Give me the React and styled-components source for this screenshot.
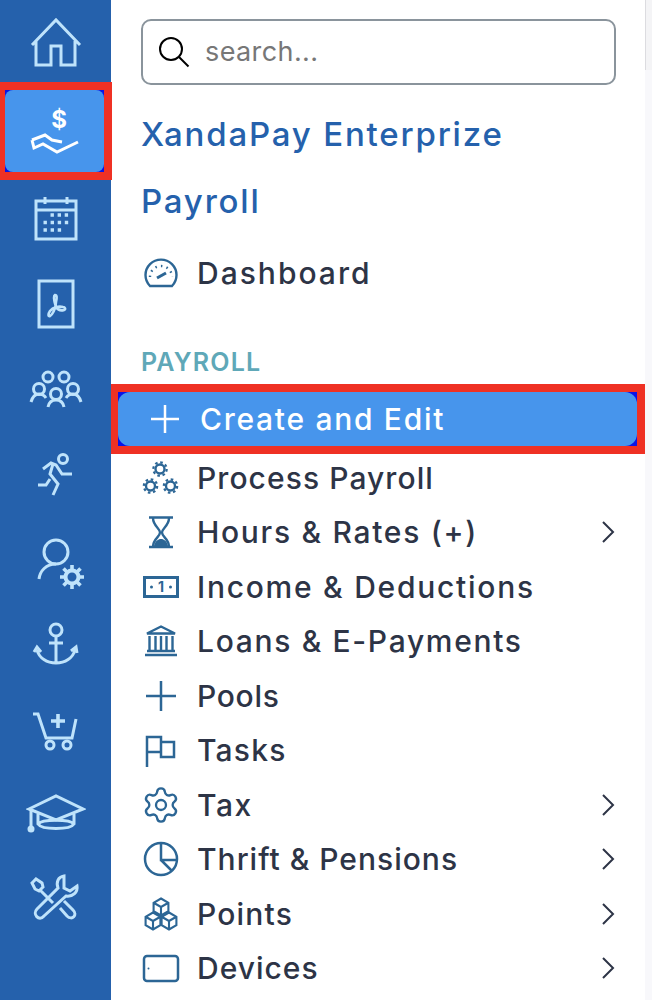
import React from 'react';
import styled, { createGlobalStyle } from 'styled-components';
import { Settings } from 'lucide-react';

const GlobalStyle = createGlobalStyle`
  html, body {
    margin: 0;
    padding: 0;
    background: #fff;
  }
  * {
    box-sizing: border-box;
  }
`;

const Page = styled.div`
  display: grid;
  grid-template-columns: 111px 534px 7px;
  width: 652px;
  height: 1000px;
  overflow: hidden;
  font-family: Inter, 'Open Sans', sans-serif;
`;

const Rail = styled.nav`
  background: #2561ac;
  display: flex;
  flex-direction: column;
  position: relative;
  z-index: 1;
`;

const RailItem = styled.div`
  height: ${({ $h }) => $h || 86}px;
  flex: none;
  display: flex;
  align-items: center;
  justify-content: center;
`;

const RailActive = styled.div`
  height: 98px;
  width: 112px;
  margin: -4px 0;
  flex: none;
  border: 8px solid #ef3124;
  border-left-width: 5px;
  background: #0a14e6;
`;

const RailActiveFill = styled.div`
  height: 100%;
  background: #4795ec;
  border-radius: 8px;
  display: flex;
  align-items: center;
  justify-content: center;
`;

const RailSvg = styled.svg`
  fill: none;
  stroke: ${({ $white }) => ($white ? '#fff' : '#bfe3fb')};
  stroke-width: 3;
`;

const DollarSign = styled.text`
  font-family: Inter, sans-serif;
  font-size: 24px;
  font-weight: 700;
  fill: #fff;
  stroke: none;
`;

const DotFill = styled.circle`
  fill: ${({ $light }) => ($light ? '#bfe3fb' : '#2c6695')};
  stroke: none;
`;

const Panel = styled.main`
  background: #fff;
  padding: 19px 29px 0 30px;
  display: flex;
  flex-direction: column;
`;

const SearchBox = styled.div`
  height: 66px;
  flex: none;
  border: 2px solid #8a949c;
  border-radius: 10px;
  display: flex;
  align-items: center;
  gap: 14px;
  padding: 0 0 2px 12px;
`;

const SearchSvg = styled.svg`
  fill: none;
  stroke: #000;
  stroke-width: 2;
  flex: none;
`;

const SearchInput = styled.input`
  border: 0;
  outline: 0;
  flex: 1;
  min-width: 0;
  padding: 0;
  background: none;
  font: 400 27px Inter, 'Open Sans', sans-serif;
  letter-spacing: 0.4px;
  &::placeholder {
    color: #777;
    opacity: 1;
  }
`;

const Heading = styled.h2`
  margin: ${({ $top }) => $top || 0}px 0 0;
  height: 67px;
  flex: none;
  display: flex;
  align-items: center;
  font-size: 33px;
  font-weight: 500;
  color: #2561ac;
  letter-spacing: 1.8px;
`;

const NavRow = styled.div`
  height: 54.5px;
  margin-top: ${({ $top }) => $top || 0}px;
  flex: none;
  display: flex;
  align-items: center;
  gap: 16px;
`;

const NavIcon = styled.span`
  width: 40px;
  height: 40px;
  flex: none;
  display: flex;
  align-items: center;
  justify-content: center;
`;

const NavSvgBase = styled.svg`
  fill: none;
  stroke: #2c6695;
  stroke-width: 2.5;
`;

const MoneyDigit = styled.text`
  font: 700 14px Inter, sans-serif;
  fill: #2c6695;
  stroke: none;
`;

const NavLabel = styled.span`
  flex: 1;
  font-size: 30px;
  font-weight: 500;
  color: #2d3446;
  white-space: nowrap;
  letter-spacing: ${({ $track }) => $track}px;
`;

const ChevronSvg = styled.svg`
  fill: none;
  stroke: #2d3446;
  stroke-width: 2;
  margin-right: 1px;
`;

const SectionLabel = styled.div`
  margin-top: 46px;
  font-size: 25px;
  line-height: 30px;
  font-weight: 600;
  letter-spacing: 1.2px;
  color: #5fa8b8;
`;

const ActiveWrap = styled.div`
  height: 70px;
  margin: 7px -29px -3px -30px;
  flex: none;
  padding: 8px;
  padding-left: 7px;
  background: #ef3124;
  position: relative;
  z-index: 1;
`;

const ActiveCorner = styled.div`
  height: 100%;
  background: #0a14e6;
`;

const ActiveRow = styled.div`
  height: 100%;
  padding-left: 27px;
  background: #4795ec;
  border-radius: 12px;
  display: flex;
  align-items: center;
  gap: 15px;
`;

const PlusSvg = styled.svg`
  fill: none;
  stroke: #fff;
  stroke-width: 2.5;
`;

const ActiveLabel = styled.span`
  font-size: 30px;
  font-weight: 500;
  letter-spacing: 1.7px;
  color: #fff;
`;

const Gutter = styled.aside`
  background: #f8f8fb;
`;

const GutterTop = styled.div`
  height: 70px;
  border-left: 1px solid #dcdce0;
  background: #f4f4f6;
`;

function NavSvg({ children }) {
  return (
    <NavSvgBase viewBox="0 0 40 40" width="40" height="40">
      {children}
    </NavSvgBase>
  );
}

function GearDot({ cx, cy }) {
  return (
    <>
      <circle cx={cx} cy={cy} r="4.5" strokeWidth="2.4" />
      <circle cx={cx} cy={cy} r="6.7" strokeWidth="2.2" strokeDasharray="2.6 2.66" />
    </>
  );
}

function Cube({ x, y }) {
  return (
    <path
      strokeWidth="2.1"
      transform={`translate(${x} ${y})`}
      d="M0-8.5 7.4-4.25V4.25L0 8.5-7.4 4.25V-4.25zM-7.4-4.25 0 0 7.4-4.25M0 0V8.5"
    />
  );
}

function Chevron() {
  return (
    <ChevronSvg viewBox="0 0 14 24" width="14" height="24">
      <path d="M2 2l10 10L2 22" />
    </ChevronSvg>
  );
}

const RAIL_ITEMS = [
  { key: 'home', draw: <path d="M6 32 30 7l24 25M10 28v24h15V33h10v19h14V28" /> },
  {
    key: 'pay',
    active: true,
    draw: (
      <>
        <path d="M7 39l2 8 9-4 14 8 21-10M7 39l13-5 7 5 10 2" />
        <DollarSign x="34" y="27" textAnchor="middle">$</DollarSign>
      </>
    ),
  },
  {
    key: 'calendar',
    draw: (
      <>
        <path d="M10 12h40v38H10zM10 21h40M19 8v7M41 8v7" />
        <path
          strokeDasharray="3.4 3.7"
          d="M24.5 26h18M17.5 33.5h25M17.5 41h18"
          strokeWidth="3.4"
        />
      </>
    ),
  },
  {
    key: 'pdf',
    draw: (
      <>
        <path d="M13 6h34v46H13z" />
        <path d="M29 20c-2 1-1 6 1 12 2 3 5 4 8 3 2-1 1-3-1-3-4-1-10 0-13 4-2 3-2 6 0 5 2-1 6-7 6-14 1-4 1-7-1-7z" strokeWidth="2.6" />
      </>
    ),
  },
  {
    key: 'people',
    h: 84,
    draw: (
      <>
        <circle cx="22" cy="17" r="5" />
        <circle cx="38" cy="17" r="5" />
        <circle cx="13" cy="29" r="5.5" />
        <circle cx="47" cy="29" r="5.5" />
        <circle cx="30" cy="34" r="5.5" />
        <path d="M5 42c2-7 5-8 8-8s5 1 7 4M55 42c-2-7-5-8-8-8s-5 1-7 4M22 47c1-5 4-7 8-7s7 2 8 7" />
      </>
    ),
  },
  {
    key: 'runner',
    draw: (
      <>
        <circle cx="37" cy="14" r="4.5" />
        <path d="M17 24l8-6 5 2 6 9h10M27 19l-3 10 8 10-5 11M24 34l-4 6h-8" />
      </>
    ),
  },
  {
    key: 'user',
    draw: (
      <>
        <circle cx="30" cy="21" r="12" />
        <path d="M13 48c1-8 7-15 17-15" />
        <circle cx="46" cy="46" r="6.5" strokeWidth="4" />
        <path strokeWidth="3.6" d="M46 34v5M46 53v5M34 46h5M53 46h5M37.5 37.5l3.5 3.5M51 51l3.5 3.5M54.5 37.5 51 41M41 51l-3.5 3.5" />
      </>
    ),
  },
  {
    key: 'anchor',
    draw: (
      <>
        <circle cx="30" cy="13" r="6" />
        <path d="M30 19v27M23 26h14M11 33c2 8 10 13 19 13s17-5 19-13" />
        <path d="M8 35l3-5 4 5M45 34l5-4 1 6" />
      </>
    ),
  },
  {
    key: 'cart',
    draw: (
      <>
        <path d="M7 11h5l8 24h26l4-19" />
        <circle cx="24" cy="42" r="4" />
        <circle cx="41" cy="42" r="4" />
        <path strokeWidth="3.6" d="M32 11v14M25 18h14" />
      </>
    ),
  },
  {
    key: 'cap',
    h: 78,
    draw: (
      <>
        <path d="M3 24 30 11l27 13-27 11z" />
        <path d="M12 29v10c4 6 32 6 36 0V29M12 39c4-5 32-5 36 0M5 25v18" />
        <DotFill $light cx="5" cy="44" r="3.5" />
      </>
    ),
  },
  {
    key: 'tools',
    h: 92,
    draw: (
      <>
        <path d="M6 13l4-4 6 4 1 4-4 4-4-2zM15 21l12 12M34 38l7 8c5 5 11-1 6-6l-9-9" />
        <path d="M38 6c-6 1-8 6-6 12L11 39c-5 5 2 13 7 7l22-20c7 1 12-4 11-10l-7 5-6-3v-6z" />
      </>
    ),
  },
];

const NAV_ITEMS = [
  {
    label: 'Process Payroll',
    track: 1.07,
    icon: (
      <NavSvg>
        <GearDot cx="19" cy="11" />
        <GearDot cx="9.5" cy="28" />
        <GearDot cx="29.5" cy="28" />
      </NavSvg>
    ),
  },
  {
    label: 'Hours & Rates (+)',
    track: 1.7,
    more: true,
    icon: (
      <NavSvg>
        <path strokeWidth="2.4" d="M8 5.5h24M8 35h24M12 6c0 8 7 10 7 14.5s-7 6-7 14.5M28 6c0 8-7 10-7 14.5s7 6 7 14.5" />
        <path strokeWidth="0" fill="#2c6695" d="M13 34c1-5 4-7 7-7s6 2 7 7z" />
      </NavSvg>
    ),
  },
  {
    label: 'Income & Deductions',
    track: 1.74,
    icon: (
      <NavSvg>
        <rect x="3.5" y="10.5" width="33" height="19" strokeWidth="3" />
        <MoneyDigit x="20" y="25" textAnchor="middle">1</MoneyDigit>
        <DotFill cx="10.5" cy="20" r="1.5" />
        <DotFill cx="29.5" cy="20" r="1.5" />
      </NavSvg>
    ),
  },
  {
    label: 'Loans & E-Payments',
    track: 1.67,
    icon: (
      <NavSvg>
        <path strokeWidth="2.4" d="M6 12.5 20 5.5l14 7zM4 34h32M6 30h28" />
        <path strokeWidth="2.4" d="M8.5 15v14M14.5 15v14M20 15v14M25.5 15v14M31.5 15v14" />
      </NavSvg>
    ),
  },
  {
    label: 'Pools',
    track: 0.7,
    icon: (
      <NavSvg>
        <path d="M20 5v30M5 20h30" />
      </NavSvg>
    ),
  },
  {
    label: 'Tasks',
    track: 1.2,
    icon: (
      <NavSvg>
        <path d="M6 37V7h14v15H6M20 12h13v15H20z" />
      </NavSvg>
    ),
  },
  {
    label: 'Tax',
    track: 1.5,
    more: true,
    icon: <Settings size={40} color="#2c6695" strokeWidth={1.4} />,
  },
  {
    label: 'Thrift & Pensions',
    track: 1,
    more: true,
    icon: (
      <NavSvg>
        <circle cx="20" cy="20" r="16" />
        <path d="M20 4v17h16M20 21l11 11" />
      </NavSvg>
    ),
  },
  {
    label: 'Points',
    track: 1.2,
    more: true,
    icon: (
      <NavSvg>
        <Cube x={20} y={13} />
        <Cube x={12} y={27} />
        <Cube x={28} y={27} />
      </NavSvg>
    ),
  },
  {
    label: 'Devices',
    track: 1,
    more: true,
    icon: (
      <NavSvg>
        <rect x="3" y="8" width="34" height="25" rx="3" />
        <DotFill cx="7.5" cy="20.5" r="1" />
      </NavSvg>
    ),
  },
];

export default function App() {
  return (
    <Page>
      <GlobalStyle />
      <Rail>
        {RAIL_ITEMS.map((item) =>
          item.active ? (
            <RailActive key={item.key}>
              <RailActiveFill>
                <RailSvg viewBox="0 0 60 60" width="60" height="60" $white>
                  {item.draw}
                </RailSvg>
              </RailActiveFill>
            </RailActive>
          ) : (
            <RailItem key={item.key} $h={item.h}>
              <RailSvg viewBox="0 0 60 60" width="60" height="60">
                {item.draw}
              </RailSvg>
            </RailItem>
          )
        )}
      </Rail>

      <Panel>
        <SearchBox>
          <SearchSvg viewBox="0 0 36 36" width="36" height="36">
            <circle cx="16" cy="16" r="11" />
            <path d="M24 24l9.5 9.5" />
          </SearchSvg>
          <SearchInput placeholder="search..." readOnly />
        </SearchBox>

        <Heading $top={15}>XandaPay Enterprize</Heading>
        <Heading>Payroll</Heading>

        <NavRow $top={12}>
          <NavIcon>
            <NavSvg>
              <path strokeWidth="2.4" d="M9 33a15.5 15.5 0 1 1 22 0z" />
              <path strokeWidth="2.4" strokeDasharray="1.5 4.2" d="M9 24a11 11 0 0 1 22 0" />
              <path strokeWidth="3" d="M16 25l9-5" />
            </NavSvg>
          </NavIcon>
          <NavLabel $track={2}>Dashboard</NavLabel>
        </NavRow>

        <SectionLabel>PAYROLL</SectionLabel>

        <ActiveWrap>
          <ActiveCorner>
            <ActiveRow>
              <PlusSvg viewBox="0 0 40 40" width="40" height="40">
                <path d="M20 6v28M6 20h28" />
              </PlusSvg>
              <ActiveLabel>Create and Edit</ActiveLabel>
            </ActiveRow>
          </ActiveCorner>
        </ActiveWrap>

        {NAV_ITEMS.map((item) => (
          <NavRow key={item.label}>
            <NavIcon>{item.icon}</NavIcon>
            <NavLabel $track={item.track}>{item.label}</NavLabel>
            {item.more && <Chevron />}
          </NavRow>
        ))}
      </Panel>

      <Gutter>
        <GutterTop />
      </Gutter>
    </Page>
  );
}
